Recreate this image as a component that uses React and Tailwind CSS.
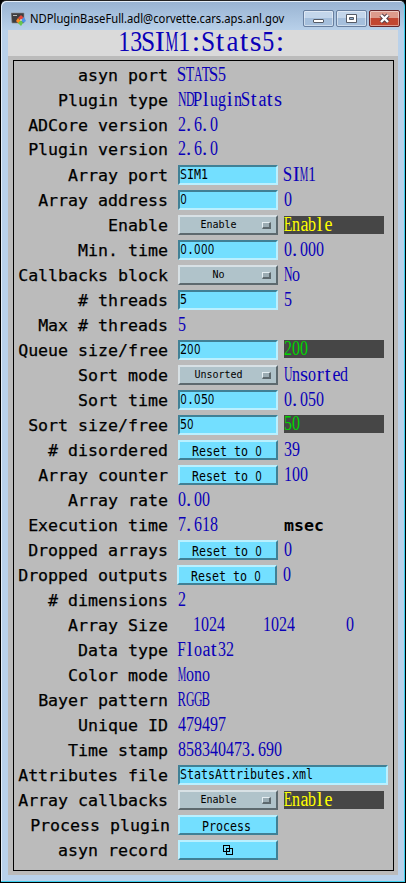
import React from "react";

const MONO = "font-['DejaVu_Sans_Mono','Liberation_Mono',monospace]";

// Advance widths (em) of serif glyphs, used to fit each one into a fixed cell.
const ADV = {
  A: 0.722, B: 0.667, D: 0.722, E: 0.611, F: 0.556, G: 0.722, I: 0.333, M: 0.889, N: 0.722,
  P: 0.556, R: 0.667, S: 0.556, T: 0.611, U: 0.722, a: 0.444, b: 0.5, d: 0.5, e: 0.444,
  g: 0.5, i: 0.278, l: 0.278, n: 0.5, o: 0.5, r: 0.333, s: 0.389, t: 0.278, u: 0.5,
  ".": 0.25, ":": 0.278,
};

function Cells({ text, size = 20, cell = 8 }) {
  return (
    <span className="relative -top-px whitespace-pre font-['Liberation_Serif',serif]" style={{ fontSize: size }}>
      {[...text].map((ch, i) => {
        const w = (ADV[ch] ?? 0.5) * size;
        const fit = ch === "S" || ch === "P" ? 1.18 : /[A-Z]/.test(ch) ? 1.06 : 1;
        return (
          <span key={i} className={`inline-flex ${ch === "." ? "justify-start" : "justify-center"}`} style={{ width: cell }}>
            <span className="shrink-0" style={{ transform: `scaleX(${Math.min(1.05, (cell * fit) / w)})` }}>{ch}</span>
          </span>
        );
      })}
    </span>
  );
}

// Fixed-width text with an undotted zero.
function Plain({ text }) {
  return (
    <span className={`inline-block origin-left scale-x-[0.865] scale-y-[1.05] whitespace-pre text-[13.45px] ${MONO}`}>
      {text.split(/(0)/).map((part, i) =>
        part === "0" ? (
          <span key={i} className="inline-block w-[0.602em] text-center font-['Liberation_Sans',sans-serif]">
            <span className="inline-block scale-x-[0.88] text-[14.3px] leading-none">0</span>
          </span>
        ) : (
          part
        )
      )}
    </span>
  );
}

const Field = ({ text, wide }) => (
  <div className={`h-5 shrink-0 border-2 border-t-[#408095] border-l-[#408095] border-r-[#baf0ff] border-b-[#baf0ff] bg-[#73dfff] text-black ${wide ? "w-[210px]" : "w-[100px]"}`}>
    <div className="flex h-[15px] items-center leading-[15px]">
      <Plain text={text} />
    </div>
  </div>
);

const Button = ({ text, shift }) => (
  <div className={`flex h-5 w-[100px] shrink-0 items-center justify-center border-2 border-t-[#baf0ff] border-l-[#baf0ff] border-r-[#408095] border-b-[#408095] bg-[#73dfff] leading-4 ${shift ? "-ml-px mr-px" : ""}`}>
    {text ? (
      <div className={`-mt-px h-4 whitespace-nowrap text-black ${text.length > 8 ? "w-[72px]" : "w-[52px]"}`}>
        <Plain text={text} />
      </div>
    ) : (
      <svg width="12" height="12" viewBox="0 0 12 12" fill="none" stroke="#000" shapeRendering="crispEdges">
        <path d="M1.5 1.5h6v6h-6zM4.5 4.5v6h6v-6z" />
      </svg>
    )}
  </div>
);

const Menu = ({ text }) => (
  <div className={`flex h-5 w-[100px] shrink-0 items-center border-2 border-t-[#d8e1e5] border-l-[#d8e1e5] border-r-[#5d696e] border-b-[#5d696e] bg-[#b0c3ca] ${MONO}`}>
    <span className="w-[77px] text-center text-[10px] leading-4 text-black">{text}</span>
    <span className="ml-[5px] h-[7px] w-[9px] border border-r-2 border-b-2 border-t-[#e4eef2] border-l-[#e4eef2] border-r-[#5d696e] border-b-[#5d696e] bg-[#9aabb2]" />
  </div>
);

const rows = [
  { label: "asyn port", value: "STATS5" },
  { label: "Plugin type", value: "NDPluginStats" },
  { label: "ADCore version", value: "2.6.0" },
  { label: "Plugin version", value: "2.6.0", up: true },
  { label: "Array port", field: "SIM1", side: "SIM1" },
  { label: "Array address", field: "0", side: "0" },
  { label: "Enable", menu: "Enable", side: "Enable", tone: "yellow" },
  { label: "Min. time", field: "0.000", side: "0.000" },
  { label: "Callbacks block", menu: "No", side: "No" },
  { label: "# threads", field: "5", side: "5" },
  { label: "Max # threads", value: "5" },
  { label: "Queue size/free", field: "200", side: "200", tone: "green" },
  { label: "Sort mode", menu: "Unsorted", side: "Unsorted" },
  { label: "Sort time", field: "0.050", side: "0.050" },
  { label: "Sort size/free", field: "50", side: "50", tone: "green" },
  { label: "# disordered", button: "Reset to 0", side: "39" },
  { label: "Array counter", button: "Reset to 0", side: "100" },
  { label: "Array rate", value: "0.00" },
  { label: "Execution time", value: "7.618", unit: "msec" },
  { label: "Dropped arrays", button: "Reset to 0", side: "0" },
  { label: "Dropped outputs", button: "Reset to 0", side: "0", shift: true },
  { label: "# dimensions", value: "2" },
  { label: "Array Size", sizes: ["1024", "1024", "0"] },
  { label: "Data type", value: "Float32" },
  { label: "Color mode", value: "Mono" },
  { label: "Bayer pattern", value: "RGGB" },
  { label: "Unique ID", value: "479497" },
  { label: "Time stamp", value: "858340473.690" },
  { label: "Attributes file", field: "StatsAttributes.xml", wide: true },
  { label: "Array callbacks", menu: "Enable", side: "Enable", tone: "yellow" },
  { label: "Process plugin", button: "Process", nudge: true },
  { label: "asyn record", button: "" },
];

function Side({ row }) {
  if (row.tone) {
    const green = row.tone === "green";
    return (
      <div className={`ml-1.5 h-[18px] w-[100px] bg-[#464646] leading-[18px] ${green ? "text-[#00d800]" : "mt-px text-[#ffff00]"}`}>
        <Cells text={row.side} />
      </div>
    );
  }
  return (
    <div className={`leading-5 text-[#0a00b8] ${row.shift ? "ml-[5px]" : "ml-1.5"}`}>
      <Cells text={row.side} />
    </div>
  );
}

function Row({ row }) {
  return (
    <div className={`flex h-[25px] items-start ${row.up ? "-mt-px mb-px" : ""}`}>
      <div className={`shrink-0 whitespace-nowrap pt-px text-right text-[16.6px] leading-5 text-black [-webkit-text-stroke:0.25px_black] ${MONO} ${row.nudge ? "mr-[8px] w-[156px]" : "mr-2.5 w-[154px]"}`}>
        {row.label}
      </div>
      {row.value !== undefined && (
        <div className="w-[106px] whitespace-nowrap leading-5 text-[#0a00b8]">
          <Cells text={row.value} />
        </div>
      )}
      {row.unit && <div className={`pt-px text-[16.6px] font-bold leading-5 text-black ${MONO}`}>{row.unit}</div>}
      {row.sizes && (
        <div className="flex leading-5 text-[#0a00b8]">
          {row.sizes.map((s, i) => (
            <div key={i} className={`text-right ${i === 0 ? "w-[47px]" : i === 1 ? "w-[70px]" : "w-[59px]"}`}>
              <Cells text={s} />
            </div>
          ))}
        </div>
      )}
      {row.field !== undefined && <Field text={row.field} wide={row.wide} />}
      {row.menu && <Menu text={row.menu} />}
      {row.button !== undefined && <Button text={row.button} shift={row.shift} />}
      {row.side && <Side row={row} />}
    </div>
  );
}

const CAPTION = "flex h-[17px] items-center justify-center rounded-[2px] border shadow-[inset_0_0_0_1px_rgba(255,255,255,0.45)]";

function TitleBar() {
  return (
    <div className="flex h-[29px] items-start pl-[10px] pr-[5px]">
      <svg className="mt-[11px]" width="16" height="15" viewBox="0 0 16 15">
        <path d="M0 1h13v10H1z" fill="#3d3d40" stroke="#8b8b8b" strokeWidth=".6" />
        <path d="M2 3h4v1H2z" fill="#bbb" />
        <path d="M10 3l3 3-3 2-3-2z" fill="#e5483c" />
        <path d="M7 6l3 3-2 3-3-3z" fill="#ff8b25" />
        <path d="M13 5l2 4-3 2-2-3z" fill="#4e91e6" />
        <path d="M10 8l2 3-2 3-3-3z" fill="#66c650" />
        <path d="M10 7l1 1-1 1-1-1z" fill="#fff" />
      </svg>
      <div className="ml-[3px] mt-[9px] w-[258px] shrink-0 whitespace-nowrap font-['Noto_Sans',sans-serif] text-[12px] leading-[18px] text-black">
        <span className="inline-block origin-left scale-x-[0.936]">NDPluginBaseFull.adl@corvette.cars.aps.anl.gov</span>
      </div>
      <div className="ml-auto mt-[9px] flex gap-[2px]">
        <div className={`${CAPTION} w-[31px] border-[#687f9f] bg-linear-to-b from-[#c3d6eb] from-45% to-[#a5bfdc] to-50%`}>
          <span className="mt-1 h-1 w-[11px] rounded-[1px] border border-[#555b66] bg-white" />
        </div>
        <div className={`${CAPTION} w-[31px] border-[#687f9f] bg-linear-to-b from-[#c3d6eb] from-45% to-[#a5bfdc] to-50%`}>
          <svg width="11" height="9" viewBox="0 0 11 9">
            <path d="M.5.5h10v8H.5z" fill="#fff" stroke="#555b66" />
            <path d="M3.5 3.5h4v2h-4z" fill="#8db0d2" stroke="#555b66" />
          </svg>
        </div>
        <div className={`${CAPTION} w-[31px] border-[#66252a] bg-linear-to-b from-[#dd9a8b] from-45% to-[#c24631] to-50%`}>
          <svg width="13" height="11" viewBox="0 0 13 11">
            <path d="M3 2l7 7M10 2L3 9" stroke="#574048" strokeWidth="4.4" />
            <path d="M3 2l7 7M10 2L3 9" stroke="#fff" strokeWidth="2.4" />
          </svg>
        </div>
      </div>
    </div>
  );
}

export default function App() {
  return (
    <div className="h-[883px] w-[406px] overflow-hidden bg-black">
      <div className="flex h-[883px] w-[406px] flex-col rounded-t-[6px] border border-black border-t-[#222] bg-linear-to-b from-[#98b3d2] to-[#b9d1ea] to-[30px] shadow-[inset_-1px_-1px_0_#3ccfee,inset_1px_1px_0_#e4eef8]">
        <TitleBar />
        <div className="mx-[7px] flex h-[845px] w-[390px] flex-col bg-[#bbbbbb]">
          <div className="h-[26px] shrink-0 bg-[#dadada] pl-[110px] leading-[25px] text-[#0a00b8]">
            <Cells text="13SIM1:Stats5:" size={29} cell={12} />
          </div>
          <div className="ml-[5px] mt-1 h-[811px] w-[381px] shrink-0 border border-black pt-1">
            {rows.map((row) => (
              <Row key={row.label} row={row} />
            ))}
          </div>
        </div>
      </div>
    </div>
  );
}
